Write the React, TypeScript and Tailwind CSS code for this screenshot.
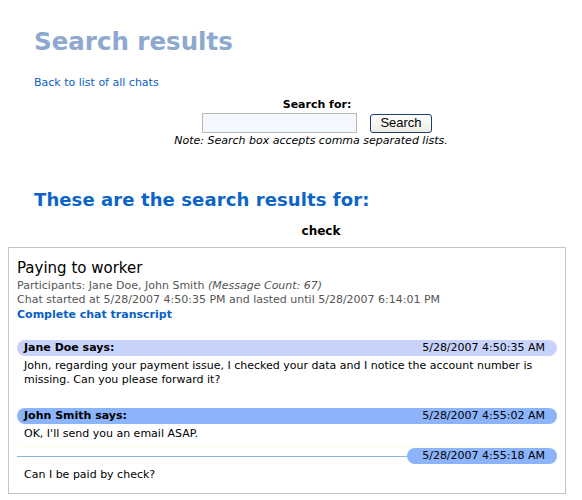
import React from "react";

type Msg = {
    who?: string;
    time: string;
    text: string;
    tone: "light" | "dark";
};

const messages: Msg[] = [
    {
        who: "Jane Doe says:",
        time: "5/28/2007 4:50:35 AM",
        text: "John, regarding your payment issue, I checked your data and I notice the account number is missing. Can you please forward it?",
        tone: "light",
    },
    { who: "John Smith says:", time: "5/28/2007 4:55:02 AM", text: "OK, I'll send you an email ASAP.", tone: "dark" },
    { time: "5/28/2007 4:55:18 AM", text: "Can I be paid by check?", tone: "dark" },
];

function Message({ m }: { m: Msg }) {
    if (!m.who) {
        // continuation: no name, just a rule and the time pill
        return (
            <div>
                <div className="flex items-center h-[16px]">
                    <div className="flex-1 h-px bg-[#8db4dc]" />
                    <div className="w-[150px] h-[16px] rounded-full bg-[#8cb4fa] text-right pr-[12px] leading-[16px]">{m.time}</div>
                </div>
                <div className="px-[7px] pt-[4px] leading-[14px]">{m.text}</div>
            </div>
        );
    }
    return (
        <div>
            <div className={`flex justify-between h-[16px] leading-[16px] rounded-full px-[7px] pr-[12px] ${m.tone === "light" ? "bg-[#c8d3fb]" : "bg-[#8cb4fa]"}`}>
                <span className="font-bold">{m.who}</span>
                <span>{m.time}</span>
            </div>
            <div className="px-[7px] pt-[3px] leading-[14px]">{m.text}</div>
        </div>
    );
}

export default function App() {
    return (
        <div className="bg-white w-[582px] h-[500px] text-[11px] text-black" style={{ fontFamily: '"DejaVu Sans", Verdana, sans-serif' }}>
            <div className="px-[34px] pt-[25px]">
                <h1 className="text-[24.5px] font-bold text-[#8ea9cf] leading-[34px]">Search results</h1>
                <a href="#" className="block mt-[17px] text-[#0a5fc4] leading-[14px]">Back to list of all chats</a>
            </div>

            <div className="flex flex-col items-center mt-[8px] ml-[52px]">
                <div className="font-bold leading-[14px]">Search for:</div>
                <div className="flex items-center gap-[13px] mt-[1px]">
                    <input className="w-[155px] h-[20px] bg-[#f4f8ff] border border-[#b8b8b8] outline-none" />
                    <button className="h-[19px] w-[62px] border border-[#1c3f78] rounded-[3px] bg-gradient-to-b from-white to-[#ecebe3] text-[13px] leading-[16px]" style={{ fontFamily: '"Liberation Sans", Arial, sans-serif' }}>
                        Search
                    </button>
                </div>
                <div className="italic text-[11px] leading-[14px] mt-[1px] -ml-[12px]">Note: Search box accepts comma separated lists.</div>
            </div>

            <h2 className="px-[34px] mt-[40px] text-[18px] font-bold text-[#0b64c8] leading-[24px] tracking-[0.1px]">These are the search results for:</h2>
            <div className="text-center font-bold text-[12px] mt-[12px] leading-[14px] pl-[60px]">check</div>

            <div className="mx-[8px] mt-[9px] w-[558px] h-[247px] border border-[#c4c4c4] px-[8px] pt-[10px]">
                <div className="text-[15px] leading-[21px]">Paying to worker</div>
                <div className="text-[#555] leading-[14px]">
                    Participants: Jane Doe, John Smith <i>(Message Count: 67)</i>
                </div>
                <div className="text-[#555] leading-[14px]">Chat started at 5/28/2007 4:50:35 PM and lasted until 5/28/2007 6:14:01 PM</div>
                <a href="#" className="block font-bold text-[#0a5fc4] leading-[14px] mt-[1px]">Complete chat transcript</a>

                <div className="mt-[18px] flex flex-col gap-[24px]">
                    <Message m={messages[0]} />
                    <div className="-mt-[3px]">
                        <Message m={messages[1]} />
                    </div>
                </div>
                <div className="h-[5px] bg-[#fffdf7] mt-[2px]" />
                <Message m={messages[2]} />
            </div>
        </div>
    );
}
